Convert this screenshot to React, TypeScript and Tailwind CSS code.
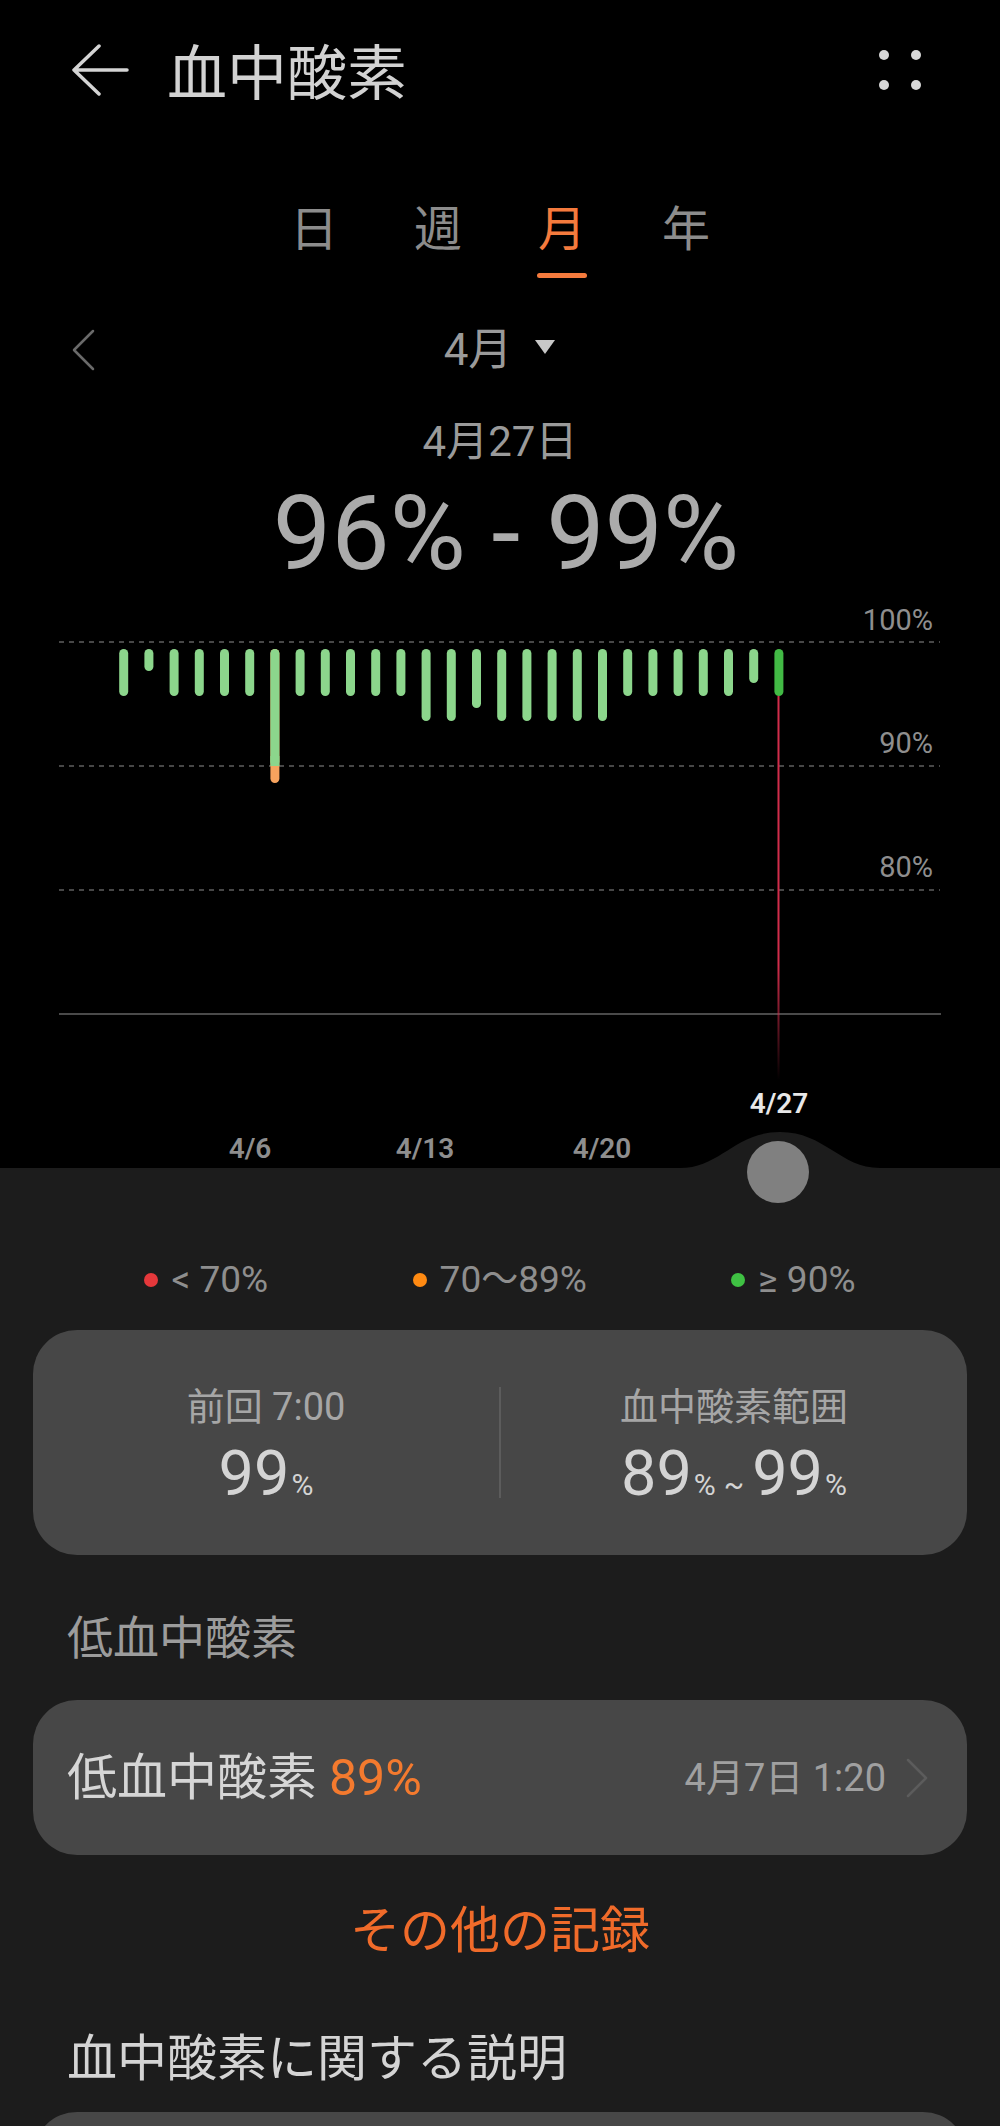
import React from "react";

const bottoms = [
  696, 671, 696, 696, 696, 696, 783, 696, 696, 696, 696, 696, 721, 721, 708,
  721, 721, 721, 721, 721, 696, 696, 696, 696, 696, 683, 696,
];

const GREEN = "#8cd68c";

function Chart() {
  const oy = 587;
  return (
    <div className="relative h-[581px] w-full shrink-0">
      <svg
        className="absolute inset-0"
        width={1000}
        height={581}
        viewBox="0 0 1000 581"
      >
        <defs>
          <linearGradient
            id="redfade"
            gradientUnits="userSpaceOnUse"
            x1="0"
            y1="109"
            x2="0"
            y2="493"
          >
            <stop offset="0" stopColor="#d22d4b" stopOpacity="1" />
            <stop offset="0.7" stopColor="#d22d4b" stopOpacity="1" />
            <stop offset="1" stopColor="#d22d4b" stopOpacity="0" />
          </linearGradient>
        </defs>
        {[642, 766, 890].map((y) => (
          <line
            key={y}
            x1={59}
            x2={940}
            y1={y - oy}
            y2={y - oy}
            stroke="#474747"
            strokeWidth={2}
            strokeDasharray="5 5"
          />
        ))}
        <line
          x1={59}
          x2={941}
          y1={1014 - oy}
          y2={1014 - oy}
          stroke="#4a4a4a"
          strokeWidth={2}
        />
        <text x={933} y={630 - oy} textAnchor="end" fontSize={29} fill="#8e8e8e">
          100%
        </text>
        <text x={933} y={753 - oy} textAnchor="end" fontSize={29} fill="#8e8e8e">
          90%
        </text>
        <text x={933} y={877 - oy} textAnchor="end" fontSize={29} fill="#8e8e8e">
          80%
        </text>
        <line
          x1={778.5}
          x2={778.5}
          y1={109}
          y2={493}
          stroke="url(#redfade)"
          strokeWidth={2}
        />
        {bottoms.map((b, i) => {
          const cx = 123.7 + i * 25.2;
          const x = cx - 4.5;
          const top = 649 - oy;
          const h = b - 649;
          if (i === 6) {
            return (
              <g key={i}>
                <rect x={x} y={top} width={9} height={h} rx={4.5} fill="#f7a35e" />
                <rect x={x} y={top} width={9} height={766 - 649} rx={4.5} fill={GREEN} />
                <rect x={x} y={766 - oy - 10} width={9} height={10} fill={GREEN} />
              </g>
            );
          }
          return (
            <rect
              key={i}
              x={x}
              y={top}
              width={9}
              height={h}
              rx={4.5}
              fill={i === 26 ? "#42ba45" : GREEN}
            />
          );
        })}
        <text
          x={779}
          y={1113 - oy}
          textAnchor="middle"
          fontSize={28}
          fontWeight={600}
          fill="#e8e8e8"
        >
          4/27
        </text>
        {[
          ["4/6", 250],
          ["4/13", 425],
          ["4/20", 602],
        ].map(([t, x]) => (
          <text
            key={t as string}
            x={x as number}
            y={1158 - oy}
            textAnchor="middle"
            fontSize={28}
            fontWeight={600}
            fill="#8e8e8e"
          >
            {t}
          </text>
        ))}
      </svg>
    </div>
  );
}

export default function App() {
  return (
    <div className="w-[1000px] h-[2126px] overflow-hidden bg-black flex flex-col font-['Roboto','Noto_Sans_CJK_JP',sans-serif]">
      {/* Header */}
      <div className="h-[140px] flex items-center pl-[70px] shrink-0">
        <svg width={60} height={52} viewBox="0 0 60 52" fill="none">
          <path
            d="M57 26H4M29 2L4 26L29 50"
            stroke="#d4d4d4"
            strokeWidth={3.5}
            strokeLinecap="round"
            strokeLinejoin="round"
          />
        </svg>
        <span className="ml-[37px] mt-[10px] text-[60px] leading-[60px] text-[#d2d2d2]">
          血中酸素
        </span>
        <div className="ml-auto mr-[79px] grid grid-cols-2 gap-x-[22px] gap-y-[20px]">
          <span className="w-[10px] h-[10px] rounded-full bg-[#d8d8d8]" />
          <span className="w-[10px] h-[10px] rounded-full bg-[#d8d8d8]" />
          <span className="w-[10px] h-[10px] rounded-full bg-[#d8d8d8]" />
          <span className="w-[10px] h-[10px] rounded-full bg-[#d8d8d8]" />
        </div>
      </div>

      {/* Tabs */}
      <div className="h-[150px] flex justify-center pt-[66px] shrink-0">
        {["日", "週", "月", "年"].map((t, i) => (
          <div key={t} className="w-[124px] flex flex-col items-center">
            <span
              className={
                i === 2
                  ? "text-[48px] leading-[48px] text-[#f47a3d]"
                  : "text-[48px] leading-[48px] text-[#8c8c8c]"
              }
            >
              {t}
            </span>
            <span
              className={
                i === 2
                  ? "mt-[19px] h-[5px] w-[50px] rounded-full bg-[#f47a3d]"
                  : "mt-[19px] h-[5px] w-[50px] rounded-full bg-transparent"
              }
            />
          </div>
        ))}
      </div>

      {/* Month selector */}
      <div className="h-[120px] grid grid-cols-[1fr_auto_1fr] items-center shrink-0">
        <div className="pl-[71px]">
          <svg width={26} height={42} viewBox="0 0 26 42" fill="none">
            <path
              d="M22 2L3 21L22 40"
              stroke="#6a6a6a"
              strokeWidth={2.5}
              strokeLinecap="round"
              strokeLinejoin="round"
            />
          </svg>
        </div>
        <div className="flex items-center">
          <span className="text-[44px] leading-[44px] text-[#9a9a9a]">4月</span>
          <svg className="ml-[22px] -mt-[6px]" width={22} height={16} viewBox="0 0 22 16">
            <path d="M1 1H21L11 15Z" fill="#c8c8c8" strokeLinejoin="round" />
          </svg>
        </div>
        <div />
      </div>

      {/* Date */}
      <div className="mt-[11px] text-center text-[42px] leading-[42px] text-[#9a9a9a] shrink-0">
        4月27日
      </div>

      {/* Range */}
      <div className="mt-[18px] text-center text-[104px] leading-[106px] text-[#ababab] whitespace-pre shrink-0 pl-[12px]">
        96% - 99%
      </div>

      <Chart />

      {/* Bottom panel */}
      <div className="relative flex-1 bg-[#1c1c1c] pt-[92px] flex flex-col">
        <svg
          className="absolute left-[680px] top-[-36px]"
          width={200}
          height={37}
          viewBox="0 0 200 37"
        >
          <path d="M0 37V36C40 36 55 0 100 0C145 0 160 36 200 36V37Z" fill="#1c1c1c" />
        </svg>
        <div className="absolute left-[747px] top-[-27px] w-[62px] h-[62px] rounded-full bg-[#808080]" />

        {/* Legend */}
        <div className="h-[40px] flex justify-evenly items-center text-[37px] leading-[40px] text-[#8e8e8e] shrink-0">
          <div className="flex items-center">
            <span className="w-[14px] h-[14px] rounded-full bg-[#e5383b] mr-[13px]" />
            <span>&lt; 70%</span>
          </div>
          <div className="flex items-center">
            <span className="w-[14px] h-[14px] rounded-full bg-[#ff8a12] mr-[13px]" />
            <span>70～89%</span>
          </div>
          <div className="flex items-center">
            <span className="w-[14px] h-[14px] rounded-full bg-[#3fc143] mr-[13px]" />
            <span>≥ 90%</span>
          </div>
        </div>

        {/* Card 1 */}
        <div className="mx-[33px] mt-[30px] h-[225px] rounded-[44px] bg-[#474747] flex shrink-0">
          <div className="flex-1 flex flex-col items-center pt-[58px]">
            <span className="text-[38px] leading-[38px] text-[#a6a6a6]">前回 7:00</span>
            <div className="mt-[16px] flex items-baseline text-[#d4d4d4]">
              <span className="text-[63px] leading-[63px]">99</span>
              <span className="text-[30px] leading-[30px] ml-[2px]">%</span>
            </div>
          </div>
          <div className="self-center w-[2px] h-[111px] bg-[#5c5c5c]" />
          <div className="flex-1 flex flex-col items-center pt-[58px]">
            <span className="text-[38px] leading-[38px] text-[#a6a6a6]">血中酸素範囲</span>
            <div className="mt-[16px] flex items-baseline text-[#d4d4d4]">
              <span className="text-[63px] leading-[63px]">89</span>
              <span className="text-[30px] leading-[30px] ml-[2px]">%</span>
              <span className="text-[30px] leading-[30px] mx-[8px]">~</span>
              <span className="text-[63px] leading-[63px]">99</span>
              <span className="text-[30px] leading-[30px] ml-[2px]">%</span>
            </div>
          </div>
        </div>

        {/* Section label */}
        <div className="mt-[60px] pl-[67px] text-[46px] leading-[46px] text-[#9c9c9c] shrink-0">
          低血中酸素
        </div>

        {/* Card 2 */}
        <div className="mx-[33px] mt-[39px] h-[155px] rounded-[44px] bg-[#474747] flex items-center pl-[34px] pr-[39px] shrink-0">
          <span className="text-[50px] leading-[50px] text-[#d6d6d6]">低血中酸素</span>
          <span className="ml-[12px] text-[50px] leading-[50px] text-[#f47a2e]">89%</span>
          <span className="ml-auto text-[38px] leading-[38px] text-[#a0a0a0]">4月7日 1:20</span>
          <svg className="ml-[20px]" width={22} height={40} viewBox="0 0 22 40" fill="none">
            <path
              d="M2 2L20 20L2 38"
              stroke="#5c5c5c"
              strokeWidth={2.5}
              strokeLinecap="round"
              strokeLinejoin="round"
            />
          </svg>
        </div>

        {/* More records */}
        <div className="mt-[51px] text-center text-[50px] leading-[50px] text-[#f06b2a] shrink-0">
          その他の記録
        </div>

        {/* Explanation */}
        <div className="mt-[78px] pl-[67px] text-[50px] leading-[50px] text-[#d4d4d4] shrink-0">
          血中酸素に関する説明
        </div>

        <div className="mx-[33px] mt-[28px] h-[200px] rounded-[44px] bg-[#474747] shrink-0" />
      </div>
    </div>
  );
}
